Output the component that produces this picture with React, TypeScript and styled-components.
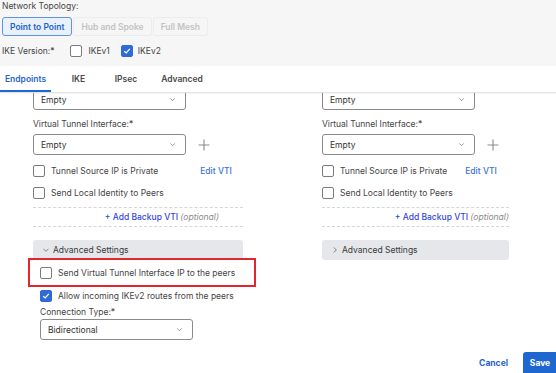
import styled, { createGlobalStyle } from "styled-components";

const GlobalStyle = createGlobalStyle`
  html, body {
    margin: 0;
    padding: 0;
    background: #ffffff;
  }
  * {
    box-sizing: border-box;
  }
`;

const Page = styled.div`
  width: 556px;
  height: 373px;
  overflow: hidden;
  font-family: Inter, "Liberation Sans", sans-serif;
  font-size: 8.5px;
  color: #333;
  background: #fff;
  display: flex;
  flex-direction: column;
  white-space: nowrap;
`;

const Header = styled.div`
  background: #f6f6f6;
  height: 66px;
  flex: none;
  padding: 1px 2px 0;
  display: flex;
  flex-direction: column;
`;

const FieldLabel = styled.div`
  color: #444;
  line-height: 11px;
`;

const Segmented = styled.div`
  display: flex;
  margin-top: 5px;
  height: 19px;
`;

const Segment = styled.div<{ $active?: boolean }>`
  display: flex;
  align-items: center;
  justify-content: center;
  padding: 0 7px;
  font-weight: 600;
  border-radius: 3px;
  border: 1px solid ${({ $active }) => ($active ? "#5e93e6" : "#ececec")};
  background: ${({ $active }) => ($active ? "#e9f1fd" : "#f6f6f6")};
  color: ${({ $active }) => ($active ? "#2563c9" : "#c3c3c3")};
  margin-right: 1px;
`;

const IkeRow = styled.div`
  display: flex;
  align-items: center;
  margin-top: 8px;
  height: 13px;
`;

const IkeLabel = styled.span`
  color: #444;
  margin-right: 16px;
`;

const CheckItem = styled.label<{ $gap?: number }>`
  display: flex;
  align-items: center;
  gap: ${({ $gap }) => $gap ?? 6}px;
  margin-right: 11px;
  color: #444;
`;

const Box = styled.span<{ $checked?: boolean }>`
  width: 12px;
  height: 12px;
  flex: none;
  border-radius: 2px;
  border: 1px solid ${({ $checked }) => ($checked ? "#2f6bd8" : "#7a7a7a")};
  background: ${({ $checked }) => ($checked ? "#2f6bd8" : "#fff")};
  display: flex;
  align-items: center;
  justify-content: center;
`;

const Tabs = styled.div`
  height: 27px;
  flex: none;
  display: flex;
  align-items: stretch;
  border-bottom: 1px solid #e3e3e3;
  box-shadow: 0 1px 1px rgba(0, 0, 0, 0.04);
  position: relative;
  z-index: 1;
  background: #fff;
`;

const Tab = styled.div<{ $active?: boolean; $w: number }>`
  width: ${({ $w }) => $w}px;
  display: flex;
  align-items: center;
  justify-content: center;
  font-weight: 600;
  padding-top: 2px;
  color: ${({ $active }) => ($active ? "#1f66d1" : "#4a4a4a")};
  border-bottom: 2px solid ${({ $active }) => ($active ? "#1f66d1" : "transparent")};
`;

const Body = styled.div`
  height: 252px;
  flex: none;
  overflow: hidden;
  display: grid;
  grid-template-columns: 210px 187px;
  column-gap: 79px;
  padding-left: 33px;
  align-items: start;
`;

const Column = styled.div`
  display: flex;
  flex-direction: column;
  margin-top: -4px;
`;

const SelectBox = styled.div<{ $w?: number }>`
  width: ${({ $w }) => $w ?? 153}px;
  height: 21px;
  border: 1px solid #8a8a8a;
  border-radius: 3px;
  display: flex;
  align-items: center;
  justify-content: space-between;
  padding: 0 9px 0 7px;
  color: #333;
  background: #fff;
`;

const SelectRow = styled.div`
  display: flex;
  align-items: center;
  gap: 12px;
`;

const Label = styled.div<{ $mt: number; $mb: number }>`
  margin-top: ${({ $mt }) => $mt}px;
  margin-bottom: ${({ $mb }) => $mb}px;
  line-height: 11px;
  color: #444;
`;

const Row = styled.div<{ $mt: number }>`
  display: flex;
  align-items: center;
  margin-top: ${({ $mt }) => $mt}px;
  height: 13px;
`;

const RowText = styled.span`
  margin-left: 6px;
  color: #444;
`;

const EditLink = styled.span<{ $ml: number }>`
  margin-left: ${({ $ml }) => $ml}px;
  color: #3a72d9;
  font-weight: 500;
`;

const Dotted = styled.div`
  border-top: 1px dashed #d6d6d6;
  padding: 4px 0 4px;
  margin-top: 8px;
  border-bottom: 1px dashed #d6d6d6;
  display: flex;
  justify-content: flex-end;
  line-height: 10px;
`;

const AddLink = styled.span<{ $mr: number }>`
  color: #3446db;
  font-weight: 500;
  margin-right: ${({ $mr }) => $mr}px;
  i {
    color: #8a8a8a;
    font-weight: 400;
  }
`;

const Accordion = styled.div`
  margin-top: 13px;
  height: 20px;
  background: #e6e7ea;
  border-radius: 3px;
  display: flex;
  align-items: center;
  padding-left: 9px;
  gap: 3px;
  color: #3a3a3a;
`;

const Highlight = styled.div`
  margin: -2px -13px 0 -12px;
  height: 29px;
  border: 2px solid #e0262e;
  display: flex;
  align-items: center;
  padding-left: 10px;
`;

const Inner = styled.div`
  padding-left: 7px;
  display: flex;
  flex-direction: column;
`;

const Footer = styled.div`
  flex: 1;
  display: flex;
  justify-content: flex-end;
  align-items: flex-start;
  padding-top: 7px;
  margin-right: -10px;
`;

const CancelButton = styled.div`
  font-weight: 700;
  color: #2a63c8;
  height: 21px;
  display: flex;
  align-items: center;
  margin-right: 15px;
`;

const SaveButton = styled.div`
  background: #1e66d0;
  color: #fff;
  font-weight: 700;
  border-radius: 3px;
  height: 24px;
  width: 43px;
  display: flex;
  align-items: center;
  justify-content: center;
  padding-bottom: 3px;
  padding-right: 9px;
`;

const Check = () => (
  <svg width="8" height="8" viewBox="0 0 8 8">
    <path d="M1.2 4.2 L3.2 6 L6.8 1.8" fill="none" stroke="#fff" strokeWidth="1.2" />
  </svg>
);

const Chevron = ({ dir = "down", size = 7, color = "#777" }: { dir?: "down" | "right"; size?: number; color?: string }) => (
  <svg width={size} height={size} viewBox="0 0 8 8">
    <path
      d={dir === "down" ? "M1.5 2.8 L4 5.3 L6.5 2.8" : "M2.8 1.5 L5.3 4 L2.8 6.5"}
      fill="none"
      stroke={color}
      strokeWidth="0.9"
    />
  </svg>
);

const Plus = () => (
  <svg width="12" height="12" viewBox="0 0 12 12">
    <path d="M6 0.5 V11.5 M0.5 6 H11.5" stroke="#8c8c8c" strokeWidth="1.1" />
  </svg>
);

const Select = ({ value, w }: { value: string; w?: number }) => (
  <SelectBox $w={w}>
    <span>{value}</span>
    <Chevron />
  </SelectBox>
);

const Endpoint = ({ editGap, addRight, expanded }: { editGap: number; addRight: number; expanded?: boolean }) => (
  <Column>
    <Select value="Empty" />
    <Label $mt={9} $mb={4}>Virtual Tunnel Interface:*</Label>
    <SelectRow>
      <Select value="Empty" />
      <Plus />
    </SelectRow>
    <Row $mt={9}>
      <Box />
      <RowText>Tunnel Source IP is Private</RowText>
      <EditLink $ml={editGap}>Edit VTI</EditLink>
    </Row>
    <Row $mt={9}>
      <Box />
      <RowText>Send Local Identity to Peers</RowText>
    </Row>
    <Dotted>
      <AddLink $mr={addRight}>
        + Add Backup VTI <i>(optional)</i>
      </AddLink>
    </Dotted>
    <Accordion>
      <Chevron dir={expanded ? "down" : "right"} size={8} />
      <span>Advanced Settings</span>
    </Accordion>
    {expanded && (
      <Inner>
        <Highlight>
          <Box />
          <RowText>Send Virtual Tunnel Interface IP to the peers</RowText>
        </Highlight>
        <Row $mt={2}>
          <Box $checked>
            <Check />
          </Box>
          <RowText>Allow incoming IKEv2 routes from the peers</RowText>
        </Row>
        <Label $mt={5} $mb={1}>Connection Type:*</Label>
        <Select value="Bidirectional" />
      </Inner>
    )}
  </Column>
);

export default function App() {
  return (
    <>
      <GlobalStyle />
      <Page>
        <Header>
          <FieldLabel>Network Topology:</FieldLabel>
          <Segmented>
            <Segment $active>Point to Point</Segment>
            <Segment>Hub and Spoke</Segment>
            <Segment>Full Mesh</Segment>
          </Segmented>
          <IkeRow>
            <IkeLabel>IKE Version:*</IkeLabel>
            <CheckItem>
              <Box />
              IKEv1
            </CheckItem>
            <CheckItem $gap={5}>
              <Box $checked>
                <Check />
              </Box>
              IKEv2
            </CheckItem>
          </IkeRow>
        </Header>
        <Tabs>
          <Tab $active $w={51}>Endpoints</Tab>
          <Tab $w={55}>IKE</Tab>
          <Tab $w={40}>IPsec</Tab>
          <Tab $w={72}>Advanced</Tab>
        </Tabs>
        <Body>
          <Endpoint editGap={42} addRight={24} expanded />
          <Endpoint editGap={18} addRight={0} />
        </Body>
        <Footer>
          <CancelButton>Cancel</CancelButton>
          <SaveButton>Save</SaveButton>
        </Footer>
      </Page>
    </>
  );
}
